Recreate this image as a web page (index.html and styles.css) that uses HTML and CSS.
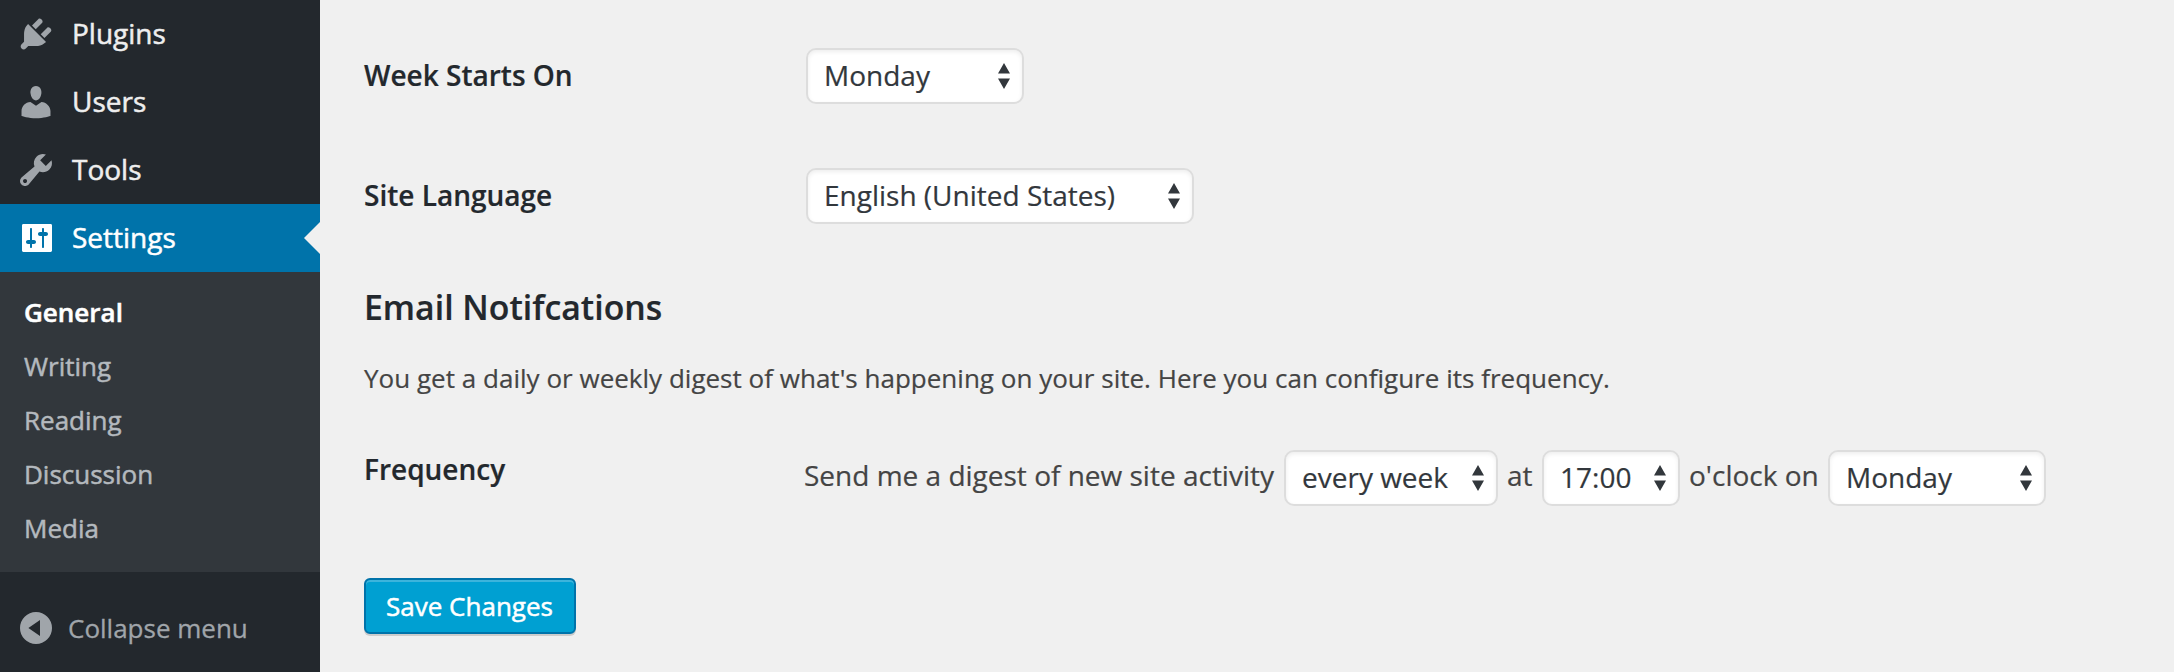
FILE: index.html
```html
<!DOCTYPE html>
<html lang="en">
<head>
<meta charset="utf-8">
<title>General Settings</title>
<link rel="stylesheet" href="styles.css">
</head>
<body>
<div class="layout">
  <nav class="sidebar">
    <a class="menu-item"><svg class="icon" viewBox="0 0 20 20"><path d="M13.11 4.36L9.87 7.6 8 5.73l3.24-3.24c.35-.34 1.05-.2 1.56.32.52.51.66 1.21.31 1.55zm-8 1.77l.91-1.12 9.01 9.01-1.19.84c-.71.71-2.63 1.16-3.82 1.16H6.14L4.9 17.26c-.59.59-1.54.59-2.12 0-.59-.58-.59-1.53 0-2.12l1.24-1.24v-3.88c0-1.13.4-3.19 1.09-3.89zm7.26 3.97l3.24-3.24c.34-.35 1.04-.21 1.55.31.52.51.66 1.21.31 1.55l-3.24 3.25z"/></svg><span class="menu-label">Plugins</span></a>
    <a class="menu-item"><svg class="icon" viewBox="0 0 20 20"><path d="M10 9.25c-2.27 0-2.73-3.44-2.73-3.44C7 4.02 7.82 2 9.97 2c2.16 0 2.98 2.02 2.71 3.81 0 0-.41 3.44-2.68 3.44zm0 2.57L12.72 10c2.39 0 4.52 2.33 4.52 4.53v2.49s-3.65 1.13-7.24 1.13c-3.65 0-7.24-1.13-7.24-1.13v-2.49c0-2.25 1.94-4.48 4.47-4.48z"/></svg><span class="menu-label">Users</span></a>
    <a class="menu-item"><svg class="icon" viewBox="0 0 20 20"><path d="M16.68 9.77c-1.34 1.34-3.3 1.67-4.95.99l-5.41 6.52c-.99.99-2.59.99-3.58 0s-.99-2.59 0-3.57l6.52-5.42c-.68-1.65-.35-3.61.99-4.95 1.28-1.28 3.12-1.62 4.72-1.06l-2.89 2.89 2.82 2.82 2.86-2.87c.53 1.58.18 3.39-1.08 4.65zM3.81 16.21c.4.39 1.04.39 1.43 0 .4-.4.4-1.04 0-1.43-.39-.4-1.03-.4-1.43 0-.39.39-.39 1.03 0 1.43z"/></svg><span class="menu-label">Tools</span></a>
    <a class="menu-item current"><svg class="icon" viewBox="0 0 20 20"><path d="M18 16.3V3.7c0-.4-.3-.7-.7-.7H3.7c-.4 0-.7.3-.7.7v12.6c0 .4.3.7.7.7h13.6c.4 0 .7-.3.7-.7zM8 11h1c.55 0 1 .45 1 1s-.45 1-1 1H8v1.5c0 .28-.22.5-.5.5s-.5-.22-.5-.5V13H6c-.55 0-1-.45-1-1s.45-1 1-1h1V5.5c0-.28.22-.5.5-.5s.5.22.5.5V11zm5-2h-1c-.55 0-1-.45-1-1s.45-1 1-1h1V5.5c0-.28.22-.5.5-.5s.5.22.5.5V7h1c.55 0 1 .45 1 1s-.45 1-1 1h-1v5.5c0 .28-.22.5-.5.5s-.5-.22-.5-.5V9z"/></svg><span class="menu-label">Settings</span><span class="pointer"></span></a>
    <div class="submenu">
      <a class="sub-item active">General</a>
      <a class="sub-item">Writing</a>
      <a class="sub-item">Reading</a>
      <a class="sub-item">Discussion</a>
      <a class="sub-item">Media</a>
    </div>
    <a class="collapse"><svg class="icon" viewBox="0 0 20 20"><path fill-rule="evenodd" d="M10 2a8 8 0 1 0 0 16 8 8 0 0 0 0-16zM12 6v8L6.2 10z"/></svg><span class="collapse-label">Collapse menu</span></a>
  </nav>
  <main class="content">
    <div class="row">
      <div class="label">Week Starts On</div>
      <div class="select w-day"><span class="value">Monday</span><svg class="arrows" viewBox="0 0 12 26"><path d="M6 0l6 10.500H0zM0 15.500h12L6 26z"/></svg></div>
    </div>
    <div class="row">
      <div class="label">Site Language</div>
      <div class="select w-language"><span class="value">English (United States)</span><svg class="arrows" viewBox="0 0 12 26"><path d="M6 0l6 10.500H0zM0 15.500h12L6 26z"/></svg></div>
    </div>
    <h3 class="heading">Email Notifcations</h3>
    <p class="description">You get a daily or weekly digest of what's happening on your site. Here you can configure its frequency.</p>
    <div class="row frequency">
      <div class="label">Frequency</div>
      <div class="sentence">
        <span class="phrase send">Send me a digest of new site activity</span>
        <div class="select w-interval"><span class="value">every week</span><svg class="arrows" viewBox="0 0 12 26"><path d="M6 0l6 10.500H0zM0 15.500h12L6 26z"/></svg></div>
        <span class="phrase at">at</span>
        <div class="select w-time"><span class="value">17:00</span><svg class="arrows" viewBox="0 0 12 26"><path d="M6 0l6 10.500H0zM0 15.500h12L6 26z"/></svg></div>
        <span class="phrase clock">o'clock on</span>
        <div class="select w-day"><span class="value">Monday</span><svg class="arrows" viewBox="0 0 12 26"><path d="M6 0l6 10.500H0zM0 15.500h12L6 26z"/></svg></div>
      </div>
    </div>
    <button class="save">Save Changes</button>
  </main>
</div>
</body>
</html>
```
FILE: styles.css
```css
* { box-sizing: border-box; }
body {
  margin: 0;
  background: #f0f0f0;
  color: #444;
  font-family: "Open Sans", sans-serif;
  font-size: 28px;
  -webkit-text-stroke: 0.2px;
}
.layout { display: flex; height: 672px; overflow: hidden; }

.sidebar { flex: none; width: 320px; background: #23282d; -webkit-text-stroke: 0.5px; }
.menu-item {
  position: relative;
  display: flex;
  align-items: center;
  height: 68px;
  padding-left: 16px;
  color: #eee;
}
.icon { width: 40px; height: 40px; flex: none; fill: #a0a5aa; stroke: none; }
.menu-label { margin-left: 16px; padding-bottom: 2px; line-height: 36px; }
.current { background: #0073aa; color: #fff; }
.current .icon { fill: #fff; }
.pointer {
  position: absolute;
  right: 0;
  top: 18px;
  border: 16px solid transparent;
  border-left: 0;
  border-right-color: #f0f0f0;
}
.submenu { height: 300px; padding: 13px 24px 17px; background: #32373c; }
.sub-item { display: block; height: 54px; line-height: 54px; font-size: 26px; color: #b4b9be; }
.active { color: #fff; font-weight: 600; }
.collapse { display: flex; align-items: center; height: 68px; margin-top: 22px; padding-left: 16px; color: #a0a5aa; font-size: 26px; -webkit-text-stroke: 0.3px; }
.collapse-label { margin-left: 12px; }

.content { flex: 1; padding: 48px 0 0 44px; }
.row { display: flex; height: 56px; margin-bottom: 64px; }
.label { width: 442px; line-height: 54px; font-weight: 600; color: #23282d; }
.select {
  display: flex;
  align-items: center;
  justify-content: space-between;
  height: 56px;
  padding: 0 12px 0 16px;
  border: 2px solid #ddd;
  border-radius: 10px;
  background: #fff;
  box-shadow: inset 0 2px 4px rgba(0, 0, 0, .07);
  color: #32373c;
  white-space: nowrap;
}
.value { padding-bottom: 2px; }
.arrows { width: 12px; height: 26px; fill: #32373c; stroke: none; }
.w-day { width: 218px; }
.w-language { width: 388px; }
.w-interval { width: 214px; }
.w-time { width: 138px; }
.heading { margin: -5px 0 0; line-height: 48px; font-size: 33.8px; font-weight: 600; color: #23282d; }
.description { margin: 28px 0 0; line-height: 38px; font-size: 26px; word-spacing: 0.08px; }
.frequency { margin: 53px 0 0; }
.frequency .label { width: 440px; line-height: 38px; }
.sentence { display: flex; }
.phrase { line-height: 50px; white-space: nowrap; }
.send { width: 480px; }
.at { width: 44px; padding-left: 9px; }
.clock { width: 148px; padding-left: 9px; }
.save {
  display: block;
  width: 212px;
  height: 56px;
  margin-top: 72px;
  padding: 0 1px 0 0;
  border: 2px solid #0073aa;
  border-radius: 6px;
  background: #00a0d2;
  box-shadow: inset 0 2px 0 rgba(120, 200, 230, .5), 0 2px 0 rgba(0, 0, 0, .15);
  color: #fff;
  font: 26px/52px "Open Sans", sans-serif;
  -webkit-text-stroke: 0.5px;
}
```
